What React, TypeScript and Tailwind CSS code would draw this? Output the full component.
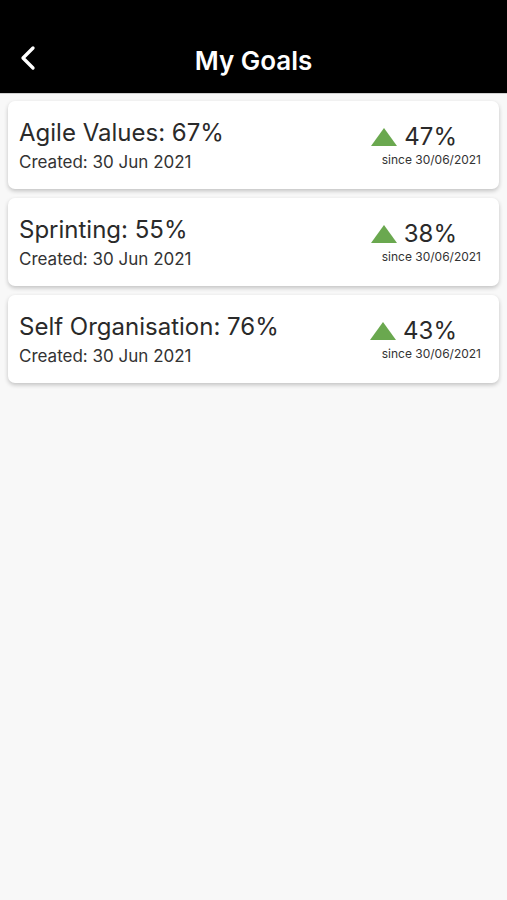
import { ChevronLeft } from 'lucide-react';

const goals = [
  { name: 'Agile Values', score: 67, change: 47 },
  { name: 'Sprinting', score: 55, change: 38 },
  { name: 'Self Organisation', score: 76, change: 43 },
];

export default function App() {
  return (
    <div className="min-h-[900px] bg-[#f8f8f8] font-['Inter',sans-serif]">
      {/* Header */}
      <div className="relative h-[94px] bg-black border-b border-[#cfcfcf] flex items-end justify-center pb-[19px]">
        <ChevronLeft className="absolute left-[8px] bottom-[15px] w-[40px] h-[40px] text-white" strokeWidth={2} />
        <h1 className="text-white text-[26px] font-semibold leading-none">My Goals</h1>
      </div>

      {/* Goals */}
      <div className="flex flex-col gap-[9px] px-[8px] pt-[7px]">
        {goals.map((goal) => (
          <div
            key={goal.name}
            className="h-[88px] bg-white rounded-[7px] shadow-[0_2px_4px_rgba(0,0,0,0.22)] flex items-center justify-between pl-[11px] pr-[18px]"
          >
            <div className="flex flex-col">
              <span className="text-[24px] text-[#2a2a2a] leading-[28px]">
                {goal.name}: {goal.score}%
              </span>
              <span className="text-[17px] text-[#333] leading-[20px] mt-[5px]">
                Created: 30 Jun 2021
              </span>
            </div>
            <div className="flex flex-col items-end">
              <div className="flex items-center gap-[7px] pr-[24px]">
                <svg width="26" height="18" viewBox="0 0 26 18">
                  <polygon points="13,0 26,18 0,18" fill="#6aa84f" />
                </svg>
                <span className="text-[24px] text-[#2a2a2a] leading-[28px]">{goal.change}%</span>
              </div>
              <span className="text-[12px] text-[#333] leading-[14px] mt-[2px]">since 30/06/2021</span>
            </div>
          </div>
        ))}
      </div>
    </div>
  );
}
